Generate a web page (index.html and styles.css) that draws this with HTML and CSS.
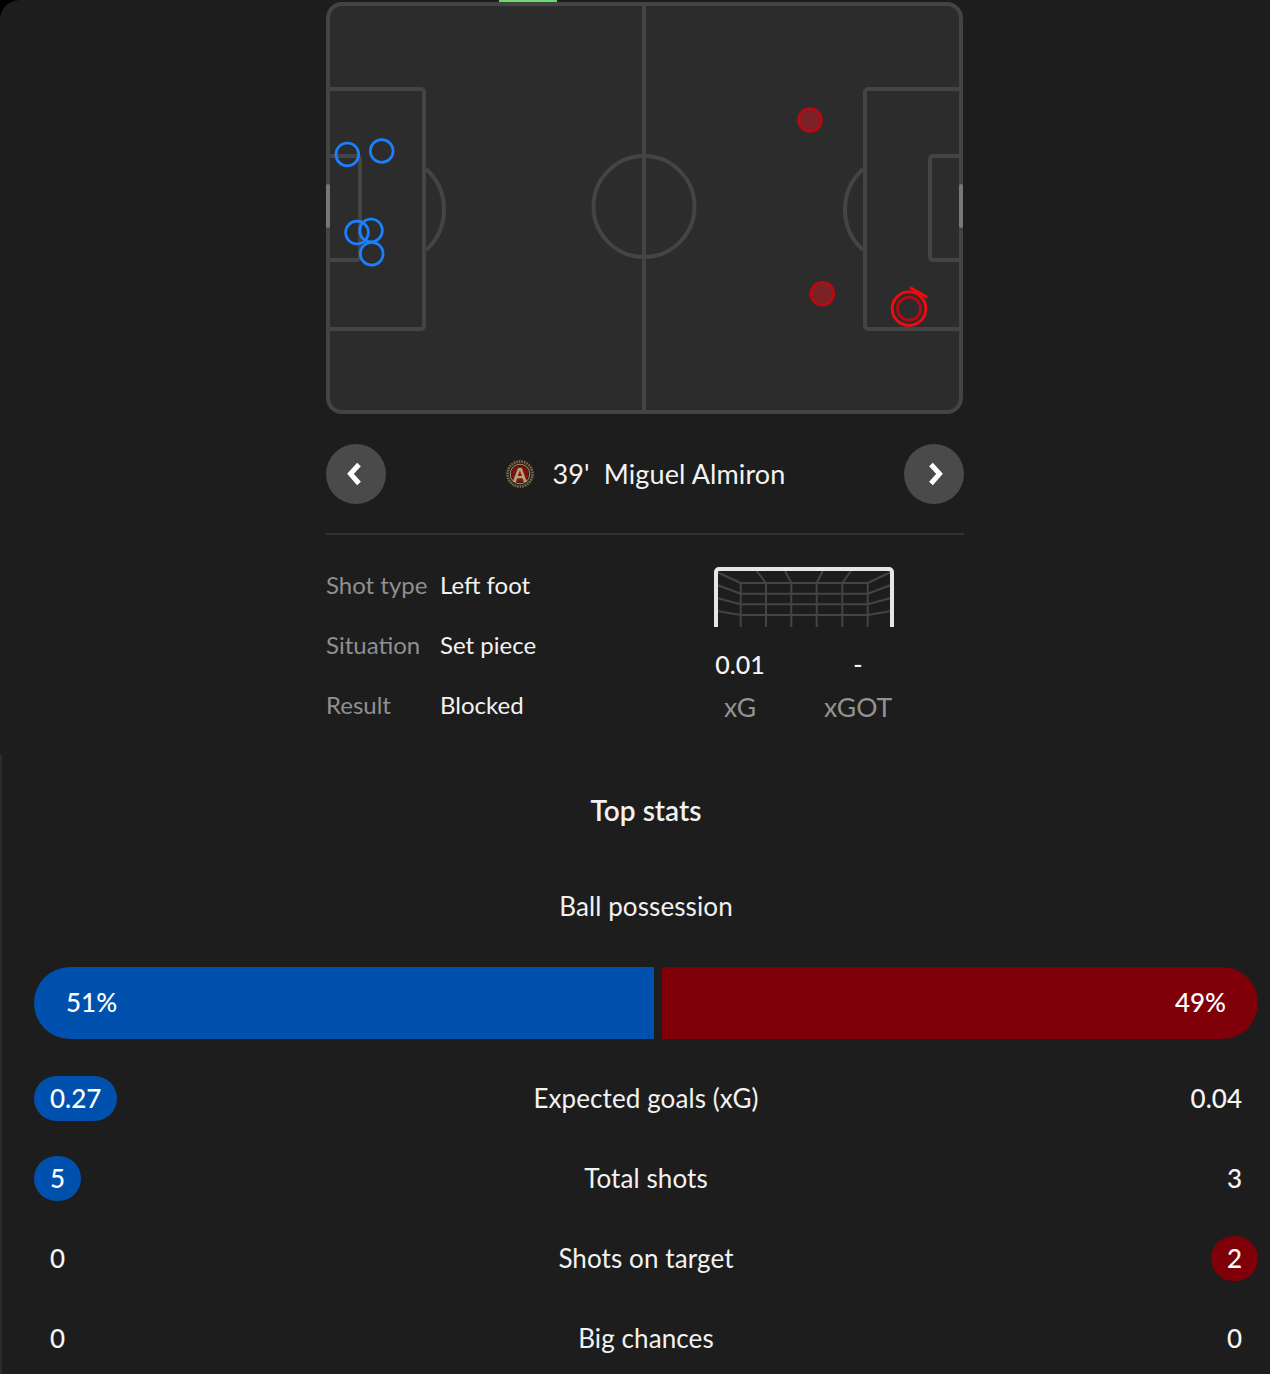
FILE: index.html
```html
<!DOCTYPE html>
<html lang="en">
<head>
<meta charset="utf-8">
<title>Match stats</title>
<link rel="stylesheet" href="styles.css">
</head>
<body>
<main class="page">
  <section class="shotmap">
    <svg class="pitch" width="638" height="414" viewBox="326 0 638 414" aria-label="Shot map">
      <rect class="turf" x="328" y="4" width="633" height="408" rx="14"/>
      <path class="line" d="M644 4V412"/>
      <circle class="line" cx="644" cy="206.5" r="50.5"/>
      <path class="line" d="M330 89H421a3 3 0 0 1 3 3V326a3 3 0 0 1-3 3H330"/>
      <path class="line" d="M330 156H357a3 3 0 0 1 3 3V257a3 3 0 0 1-3 3H330"/>
      <path class="line" d="M426 169A54.6 54.6 0 0 1 426 250"/>
      <path class="line" d="M959 89H868a3 3 0 0 0-3 3V326a3 3 0 0 0 3 3H959"/>
      <path class="line" d="M959 156H933a3 3 0 0 0-3 3V257a3 3 0 0 0 3 3H959"/>
      <path class="line" d="M863 169A54.6 54.6 0 0 0 863 250"/>
      <rect class="goal-mark" x="326" y="184" width="4" height="44" rx="2"/>
      <rect class="goal-mark" x="959" y="184" width="4" height="44" rx="2"/>
      <rect class="top-mark" x="499" y="0" width="58" height="2"/>
      <circle class="shot-blue" cx="347.3" cy="154.4" r="11.4"/>
      <circle class="shot-blue" cx="381.7" cy="151" r="11.4"/>
      <circle class="shot-blue" cx="357" cy="232.6" r="11.4"/>
      <circle class="shot-blue" cx="371" cy="230.4" r="11.4"/>
      <circle class="shot-blue" cx="371.7" cy="253.7" r="11.4"/>
      <circle class="shot-red" cx="810" cy="120" r="11.4"/>
      <circle class="shot-red" cx="822.3" cy="293.7" r="11.4"/>
      <circle class="shot-inner" cx="909" cy="308.7" r="11.5"/>
      <circle class="shot-active" cx="909" cy="308.7" r="16.8"/>
      <path class="shot-active" d="M910 287.4L927.3 297.3"/>
    </svg>

    <div class="player-nav">
      <button class="nav-btn" type="button" aria-label="Previous">
        <svg width="60" height="60" viewBox="0 0 60 60"><path class="chev" d="M33 20.5L24.5 29.8L33 39.5"/></svg>
      </button>
      <div class="player">
        <svg class="crest" width="30" height="30" viewBox="0 0 30 30">
          <circle class="crest-bg" cx="15" cy="15" r="15"/>
          <circle class="crest-letters" cx="15" cy="15" r="12.5"/>
          <circle class="crest-ring" cx="15" cy="15" r="9.8"/>
          <circle class="crest-red" cx="15" cy="15" r="8.6"/>
          <text class="crest-a" x="15" y="22.5">A</text>
        </svg>
        <span class="player-text">39'&nbsp; Miguel Almiron</span>
      </div>
      <button class="nav-btn" type="button" aria-label="Next">
        <svg width="60" height="60" viewBox="0 0 60 60"><path class="chev" d="M27 20.5L35.5 29.8L27 39.5"/></svg>
      </button>
    </div>

    <div class="divider"></div>

    <div class="details">
      <dl class="facts">
        <div class="fact"><dt>Shot type</dt><dd>Left foot</dd></div>
        <div class="fact"><dt>Situation</dt><dd>Set piece</dd></div>
        <div class="fact"><dt>Result</dt><dd>Blocked</dd></div>
      </dl>
      <div class="goal-panel">
        <svg class="goal" width="180" height="60" viewBox="0 0 180 60">
          <path class="net" d="M26.7 16V60M52 16V60M77.3 16V60M102.7 16V60M128.3 16V60M153.7 16V60M26.7 16H153.7M26.7 26.7H153.7M26.7 37.3H153.7M26.7 48H153.7M42.7 4L52 16M71 4L77.3 16M108.7 4L102.7 16M137 4L128.3 16M3 5L26.7 16M3 18L26.7 26.7M3 31L26.7 37.3M3 44L26.7 48M177 5L153.7 16M177 18L153.7 26.7M177 31L153.7 37.3M177 44L153.7 48"/>
          <path class="post" d="M2 60V5a3 3 0 0 1 3-3H175a3 3 0 0 1 3 3V60"/>
        </svg>
        <div class="xg-grid">
          <span class="xg-value">0.01</span><span class="xg-value">-</span>
          <span class="xg-label">xG</span><span class="xg-label">xGOT</span>
        </div>
      </div>
    </div>
  </section>

  <section class="stats">
    <h2 class="stats-title">Top stats</h2>
    <p class="possession-title">Ball possession</p>
    <div class="possession">
      <div class="seg seg-home">51%</div>
      <div class="seg seg-away">49%</div>
    </div>
    <div class="stat-row">
      <div class="side"><span class="val home-win">0.27</span></div>
      <span class="stat-name">Expected goals (xG)</span>
      <div class="side side-end"><span class="val">0.04</span></div>
    </div>
    <div class="stat-row">
      <div class="side"><span class="val home-win">5</span></div>
      <span class="stat-name">Total shots</span>
      <div class="side side-end"><span class="val">3</span></div>
    </div>
    <div class="stat-row">
      <div class="side"><span class="val">0</span></div>
      <span class="stat-name">Shots on target</span>
      <div class="side side-end"><span class="val away-win">2</span></div>
    </div>
    <div class="stat-row">
      <div class="side"><span class="val">0</span></div>
      <span class="stat-name">Big chances</span>
      <div class="side side-end"><span class="val">0</span></div>
    </div>
  </section>
</main>
</body>
</html>
```
FILE: styles.css
```css
* { box-sizing: border-box; }
html, body { margin: 0; height: 1374px; overflow: hidden; background: #000; }
body { font-family: "Lato", "Noto Sans", sans-serif; color: #f2f2f2; }
.page { height: 1374px; background: #1d1d1d; border-top-left-radius: 20px; overflow: hidden; }

.shotmap { margin-left: 326px; width: 638px; }
.pitch { display: block; }
.turf { fill: #2c2c2c; stroke: #444; stroke-width: 4; }
.line { fill: none; stroke: #444; stroke-width: 4; }
.goal-mark { fill: #777; }
.top-mark { fill: #6bdc6b; }
.shot-blue { fill: none; stroke: #1a80ff; stroke-width: 2.7; }
.shot-red { fill: #7c2226; stroke: #b80a14; stroke-width: 2.7; }
.shot-inner { fill: none; stroke: #b80a14; stroke-width: 2.8; }
.shot-active { fill: none; stroke: #f30a0f; stroke-width: 2.9; }

.player-nav { margin-top: 30px; height: 60px; display: flex; align-items: center; justify-content: space-between; }
.nav-btn { width: 60px; height: 60px; padding: 0; border: 0; border-radius: 50%; background: #4a4a4a; display: block; }
.nav-btn svg { display: block; }
.chev { fill: none; stroke: #fff; stroke-width: 5; }
.player { display: flex; align-items: center; gap: 18px; font-size: 27px; letter-spacing: 0.12px; color: #f2f2f2; }
.player-text { padding-bottom: 2px; }
.crest { display: block; }
.crest-bg { fill: #25211c; }
.crest-letters { fill: none; stroke: #7d6d4e; stroke-width: 2.6; stroke-dasharray: 1.6 1; }
.crest-ring { fill: none; stroke: #a8946a; stroke-width: 1; }
.crest-red { fill: #7e1016; }
.crest-a { font-family: "Liberation Sans", sans-serif; font-size: 21px; font-weight: 700; fill: #b9a272; text-anchor: middle; }

.divider { margin-top: 29px; height: 2px; background: #333; }

.details { margin-top: 20px; display: flex; }
.facts { margin: 0; width: 388px; }
.fact { height: 60px; display: flex; align-items: center; font-size: 24px; padding-bottom: 2px; }
.fact dt { width: 114px; color: #8f8f8f; }
.fact dd { margin: 0; color: #f2f2f2; }
.goal-panel { padding-top: 12px; width: 180px; }
.goal { display: block; }
.net { fill: none; stroke: #444; stroke-width: 2; }
.post { fill: none; stroke: #e6e6e6; stroke-width: 4; }
.xg-grid { margin-top: 19px; display: grid; grid-template-columns: 52px 68px; column-gap: 58px; row-gap: 7px; text-align: center; }
.xg-value { line-height: 36px; font-size: 25px; font-weight: 500; color: #f5f5f5; }
.xg-label { line-height: 36px; font-size: 26.5px; color: #939393; }

.stats { height: 619px; border-left: 2px solid #2c2c2c; margin-top: 20px; padding: 37px 12px 0 32px; }
.stats-title { margin: 0; line-height: 36px; font-size: 28px; font-weight: 600; text-align: center; color: #f2f2f2; }
.possession-title { margin: 60px 0 0; line-height: 36px; font-size: 26px; letter-spacing: 0.1px; text-align: center; }
.possession { margin-top: 43px; height: 72px; display: flex; gap: 8px; }
.seg { height: 72px; display: flex; align-items: center; font-size: 26px; font-weight: 500; color: #fff; padding: 0 32px 2px; }
.seg-home { width: 620px; background: #0051ad; border-radius: 36px 0 0 36px; }
.seg-away { flex: 1; justify-content: flex-end; background: #7f0009; border-radius: 0 36px 36px 0; }

.stat-row { height: 80px; padding-top: 17px; display: grid; grid-template-columns: 1fr auto 1fr; align-items: start; }
.possession + .stat-row { margin-top: 20px; }
.stat-name { line-height: 45px; font-size: 26px; letter-spacing: 0.1px; text-align: center; color: #f2f2f2; }
.side { display: flex; }
.side-end { justify-content: flex-end; }
.val { height: 45px; min-width: 47px; padding: 0 16px 2px; border-radius: 23px; display: flex; align-items: center; justify-content: center; font-size: 26px; font-weight: 500; color: #f5f5f5; }
.home-win { background: #0051ad; color: #fff; }
.away-win { background: #7f0009; color: #fff; }
```
